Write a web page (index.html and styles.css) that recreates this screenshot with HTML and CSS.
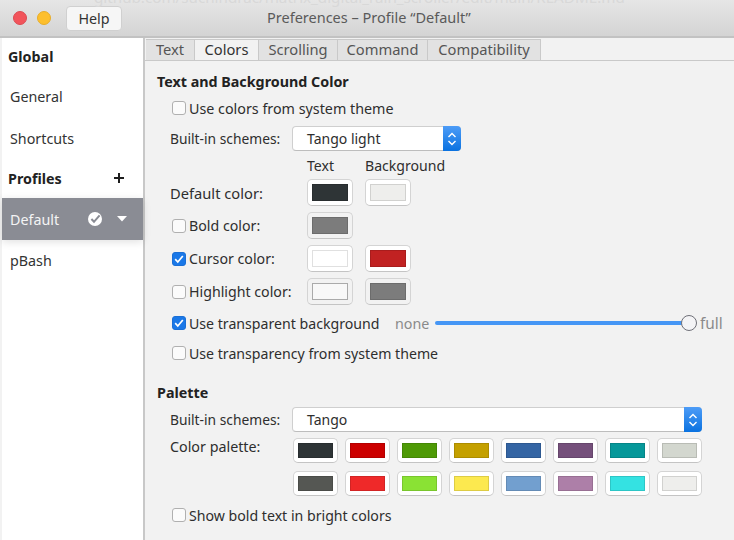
FILE: index.html
```html
<!DOCTYPE HTML>
<html>
<head>
<meta http-equiv="Content-Type" content="text/html; charset=utf-8">
<title>Preferences</title>
<link rel="stylesheet" href="styles.css">
</head>
<body>
<div class="window">
	<div class="titlebar">
		<span class="ghost">github.com/suchindrac/matrix_digital_rain_scroller/edit/main/README.md</span>
		<span class="dot dot-red"></span>
		<span class="dot dot-yellow"></span>
		<button class="help">Help</button>
		<span class="title">Preferences – Profile “Default”</span>
	</div>
	<div class="body">
		<div class="sidebar">
			<div class="side-head side-global">Global</div>
			<div class="side-item side-general">General</div>
			<div class="side-item side-shortcuts">Shortcuts</div>
			<div class="side-head side-profiles">Profiles
				<svg class="plus" width="12" height="12" viewBox="0 0 12 12"><path d="M6 1v10M1 6h10" stroke="#1d1d1d" stroke-width="2" fill="none"/></svg>
			</div>
			<div class="side-item side-selected">
				<span class="side-name">Default</span>
				<svg width="16" height="16" viewBox="0 0 16 16"><circle cx="8" cy="8" r="7" fill="#fff"/><path d="M4.4 8l2.6 2.8 5.6-6.4" stroke="#8a8c94" stroke-width="2" fill="none"/></svg>
				<svg class="caret" width="12" height="6" viewBox="0 0 12 6"><path d="M1 0h10L6 5.5z" fill="#fff"/></svg>
			</div>
			<div class="side-item side-pbash">pBash</div>
		</div>
		<div class="main">
			<div class="tabs">
				<div class="tab tab-text">Text</div>
				<div class="tab tab-colors tab-on">Colors</div>
				<div class="tab tab-scrolling">Scrolling</div>
				<div class="tab tab-command">Command</div>
				<div class="tab tab-compat">Compatibility</div>
			</div>
			<div class="content">
				<h3 class="heading h-colors">Text and Background Color</h3>
				<label class="check-row r-system"><span class="check"></span>Use colors from system theme</label>
				<div class="scheme-row r-scheme">
					<span class="label">Built-in schemes:</span>
					<div class="combo combo-small"><span>Tango light</span>
						<span class="spin"><svg width="10" height="16" viewBox="0 0 10 16"><path d="M1.5 6L5 2.5 8.5 6M1.5 10L5 13.5 8.5 10" stroke="#fff" stroke-width="1.4" fill="none"/></svg></span>
					</div>
				</div>
				<div class="color-grid">
					<span></span><span class="col-head">Text</span><span class="col-head">Background</span>

					<span class="label label-wide">Default color:</span>
					<span class="swatch"><i class="c-ink"></i></span>
					<span class="swatch"><i class="c-paper"></i></span>

					<label class="check-row"><span class="check"></span>Bold color:</label>
					<span class="swatch off"><i class="c-grey"></i></span>
					<span></span>

					<label class="check-row"><span class="check on"><svg width="14" height="14" viewBox="0 0 14 14"><path d="M3.2 7.2l2.6 2.8 5-6" stroke="#fff" stroke-width="1.7" fill="none"/></svg></span>Cursor color:</label>
					<span class="swatch"><i class="c-white"></i></span>
					<span class="swatch"><i class="c-red"></i></span>

					<label class="check-row"><span class="check"></span>Highlight color:</label>
					<span class="swatch off"><i class="c-high"></i></span>
					<span class="swatch off"><i class="c-grey"></i></span>
				</div>
				<div class="slider-row">
					<label class="check-row"><span class="check on"><svg width="14" height="14" viewBox="0 0 14 14"><path d="M3.2 7.2l2.6 2.8 5-6" stroke="#fff" stroke-width="1.7" fill="none"/></svg></span>Use transparent background</label>
					<span class="dim dim-none">none</span>
					<div class="track"><span class="thumb"></span></div>
					<span class="dim dim-full">full</span>
				</div>
				<label class="check-row r-transp"><span class="check"></span>Use transparency from system theme</label>

				<h3 class="heading h-palette">Palette</h3>
				<div class="scheme-row r-scheme2">
					<span class="label">Built-in schemes:</span>
					<div class="combo combo-wide"><span>Tango</span>
						<span class="spin"><svg width="10" height="16" viewBox="0 0 10 16"><path d="M1.5 6L5 2.5 8.5 6M1.5 10L5 13.5 8.5 10" stroke="#fff" stroke-width="1.4" fill="none"/></svg></span>
					</div>
				</div>
				<div class="palette-row">
					<span class="label palette-label">Color palette:</span>
					<div class="palette">
						<span class="swatch"><i class="p1"></i></span>
						<span class="swatch"><i class="p2"></i></span>
						<span class="swatch"><i class="p3"></i></span>
						<span class="swatch"><i class="p4"></i></span>
						<span class="swatch"><i class="p5"></i></span>
						<span class="swatch"><i class="p6"></i></span>
						<span class="swatch"><i class="p7"></i></span>
						<span class="swatch"><i class="p8"></i></span>
						<span class="swatch"><i class="p9"></i></span>
						<span class="swatch"><i class="p10"></i></span>
						<span class="swatch"><i class="p11"></i></span>
						<span class="swatch"><i class="p12"></i></span>
						<span class="swatch"><i class="p13"></i></span>
						<span class="swatch"><i class="p14"></i></span>
						<span class="swatch"><i class="p15"></i></span>
						<span class="swatch"><i class="p16"></i></span>
					</div>
				</div>
				<label class="check-row r-bright"><span class="check"></span>Show bold text in bright colors</label>
			</div>
		</div>
	</div>
</div>
</body>
</html>
```

FILE: styles.css
```css
html,body{margin:0; height:100%;}
body{width:734px; height:540px; overflow:hidden; background:#f2f2f2; color:#2e2e2e; font-family:"Noto Sans","Open Sans",sans-serif; font-size:14.3px;}
.window{display:flex; flex-direction:column; height:540px;}

/* title bar */
.titlebar{position:relative; flex:none; height:36px; display:flex; align-items:center; padding:0 0 0 13px; background:linear-gradient(#e6e6e6,#d4d4d4); border-bottom:2px solid #c2c2c2; overflow:hidden;}
.ghost{position:absolute; left:94px; top:-13px; color:#d8d8d8; font-size:15.2px; white-space:nowrap;}
.dot{width:14px; height:14px; border-radius:50%; margin-right:10px; box-sizing:border-box;}
.dot-red{background:#f2545b; border:1px solid #dc4a52;}
.dot-yellow{background:#fdbf2d; border:1px solid #e8ad29;}
.help{width:56px; height:25px; margin-left:5px; border:1px solid #d0d0d0; border-radius:4px; background:#f6f6f6; color:#333; font:14.3px "Noto Sans",sans-serif; padding:0;}
.title{position:absolute; left:267px; top:7px; color:#5a5a5a; font-size:14.5px;}

.body{flex:1; display:flex; min-height:0;}

/* sidebar */
.sidebar{flex:none; width:141px; margin-left:2px; background:#fff; border-right:2px solid #c8c8c8;}
.side-head{display:flex; align-items:center; font-weight:700; color:#222; height:20px; padding-left:6px;}
.side-item{display:flex; align-items:center; height:20px; padding-left:8px; color:#333;}
.side-global{margin-top:8px;}
.side-general{margin-top:20px;}
.side-shortcuts{margin-top:22px;}
.side-profiles{margin-top:20px; justify-content:space-between; padding-right:18px;}
.side-selected{margin-top:10px; height:42px; background:#8a8c94; color:#f4f4f4; box-shadow:0 2px 8px rgba(0,0,0,.12);}
.side-name{flex:1;}
.caret{margin:0 15px 0 13px;}
.side-pbash{margin-top:10px;}

/* tabs */
.main{flex:1; min-width:0; display:flex; flex-direction:column;}
.tabs{display:flex; height:21px; margin-top:1px; padding-left:1px; border-bottom:1px solid #c9c9c9;}
.tab{box-sizing:border-box; text-align:center; background:#e2e2e2; color:#555; border:1px solid #c9c9c9; border-left:none; border-bottom:none; line-height:18px; font-size:14.7px;}
.tab-text{width:49px;}
.tab-colors{width:64px;}
.tab-scrolling{width:79px;}
.tab-command{width:90px;}
.tab-compat{width:113px;}
.tab-on{background:#f2f2f2; color:#333;}

.content{padding:0 0 0 12px; flex:1;}
.heading{margin:0; font-size:14.3px; font-weight:700; color:#222; line-height:20px; height:20px;}
.h-colors{margin-top:11px;}
.check-row{display:flex; align-items:center; gap:3px; height:20px; white-space:nowrap;}
.check{flex:none; width:14px; height:14px; box-sizing:border-box; border:1px solid #b0b0b0; border-radius:3px; background:#fbfbfb; display:block;}
.check.on{background:#1a78e8; border-color:#1a6fd6;}
.check svg{display:block; margin:-1px;}
.r-system{margin:6px 0 0 15px;}

.scheme-row{display:flex; align-items:center; padding-left:13px;}
.scheme-row .label{width:122px; font-size:13.8px; white-space:nowrap;}
.r-scheme{margin-top:8px;}
.r-scheme2{margin-top:4px;}
.combo{display:flex; align-items:center; justify-content:space-between; box-sizing:border-box; height:25px; background:#fff; border:1px solid #cfcfcf; border-bottom-color:#bdbdbd; border-radius:4px; padding-left:14px; font-size:14px;}
.combo-small{width:169px;}
.combo-wide{width:410px;}
.spin{display:flex; align-items:center; justify-content:center; width:18px; height:25px; margin:-1px -1px -1px 0; border-radius:0 4px 4px 0; background:linear-gradient(#4d9cf7,#0a72e0);}

/* colour rows */
.color-grid{display:grid; grid-template-columns:125px 46px 46px; grid-template-rows:16px repeat(4,27px); column-gap:12px; row-gap:6px; align-items:center; margin:6px 0 0 13px;}
.color-grid .check-row{margin-left:2px; font-size:14.2px;}
.col-head{white-space:nowrap; font-size:14.1px;}
.label-wide{font-size:14.7px;}
.swatch{display:block; box-sizing:border-box; height:27px; padding:4px; background:#fff; border:1px solid #d4d4d4; border-bottom-color:#c4c4c4; border-radius:5px;}
.swatch.off{background:#f2f2f2;}
.swatch i{display:block; height:100%; box-sizing:border-box; border:1px solid rgba(0,0,0,.12);}
.c-ink{background:#2e3436;}
.c-paper{background:#eeeeec;}
.c-grey{background:#7c7c7c;}
.c-white{background:#fff;}
.c-red{background:#c12222;}
.c-high{background:#f8f8f8; border-color:#aaa !important;}

.slider-row{display:flex; align-items:center; height:20px; margin:8px 0 0 15px; white-space:nowrap;}
.slider-row .check-row{width:223px; font-size:14.15px;}
.dim{color:#8a8a8a;}
.dim-none{width:40px;}
.dim-full{font-size:15.4px;}
.track{position:relative; width:254px; height:4px; margin-right:11px; background:#4596f5; border-radius:2px;}
.thumb{position:absolute; right:-8px; top:-6px; width:16px; height:16px; box-sizing:border-box; border-radius:50%; background:#f4f4f6; border:1.5px solid #6f7078;}
.r-transp{margin:10px 0 0 15px; font-size:14.15px;}
.h-palette{margin-top:20px;}

/* palette */
.palette-row{display:flex; align-items:flex-start; padding-left:13px; margin-top:6px;}
.palette-label{width:123px; line-height:18px;}
.palette{display:grid; grid-template-columns:repeat(8,45px); grid-auto-rows:25px; column-gap:7px; row-gap:8px;}
.palette .swatch{height:25px;}
.p1{background:#2e3436;}
.p2{background:#cc0000;}
.p3{background:#4e9a06;}
.p4{background:#c4a000;}
.p5{background:#3465a4;}
.p6{background:#75507b;}
.p7{background:#06989a;}
.p8{background:#d3d7cf;}
.p9{background:#555753;}
.p10{background:#ef2929;}
.p11{background:#8ae234;}
.p12{background:#fce94f;}
.p13{background:#729fcf;}
.p14{background:#ad7fa8;}
.p15{background:#34e2e2;}
.p16{background:#eeeeec;}
.r-bright{margin:9px 0 0 15px; font-size:14.15px;}
```
